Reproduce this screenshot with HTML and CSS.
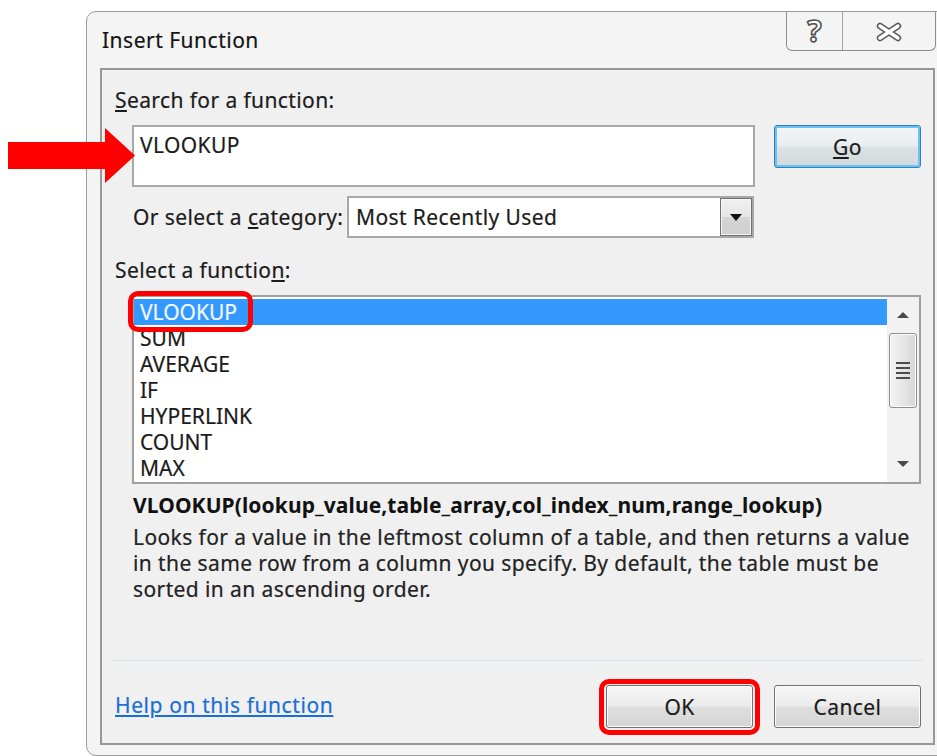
FILE: index.html
```html
<!DOCTYPE html>
<html lang="en">
<head>
<meta charset="utf-8">
<title>Insert Function</title>
<link rel="stylesheet" href="styles.css">
</head>
<body>
<div class="stage">
  <div class="dialog">
    <div class="titlebar">
      <span class="title">Insert Function</span>
      <div class="caption-btns">
        <span class="cap help">?</span>
        <span class="cap close">
          <svg width="28" height="20" viewBox="0 0 28 20">
            <path d="M5 4 L23 16 M23 4 L5 16" stroke="#5a5a5a" stroke-width="6.5" stroke-linecap="round" fill="none"/>
            <path d="M5 4 L23 16 M23 4 L5 16" stroke="#ffffff" stroke-width="3.5" stroke-linecap="round" fill="none"/>
          </svg>
        </span>
      </div>
    </div>

    <div class="panel">
      <div class="label"><u>S</u>earch for a function:</div>
      <div class="search-row">
        <div class="textbox">VLOOKUP</div>
        <button class="btn go"><u>G</u>o</button>
      </div>

      <div class="category-row">
        <span class="label">Or select a <u>c</u>ategory:</span>
        <div class="select">
          <span class="select-value">Most Recently Used</span>
          <span class="select-arrow">
            <svg width="12" height="7" viewBox="0 0 12 7"><path d="M0 0 H12 L6 7 Z" fill="#111"/></svg>
          </span>
        </div>
      </div>

      <div class="label fn-label">Select a functio<u>n</u>:</div>
      <div class="listbox">
        <ul class="items">
          <li class="selected"><span class="hl">VLOOKUP</span></li>
          <li>SUM</li>
          <li>AVERAGE</li>
          <li>IF</li>
          <li>HYPERLINK</li>
          <li>COUNT</li>
          <li>MAX</li>
        </ul>
        <div class="scrollbar">
          <span class="sb-arrow">
            <svg width="12" height="6" viewBox="0 0 12 6"><path d="M0 6 L6 0 L12 6 Z" fill="#4a4a4a"/></svg>
          </span>
          <div class="sb-track">
            <div class="sb-thumb">
              <span class="grip"></span><span class="grip"></span><span class="grip"></span><span class="grip"></span>
            </div>
          </div>
          <span class="sb-arrow">
            <svg width="12" height="6" viewBox="0 0 12 6"><path d="M0 0 L12 0 L6 6 Z" fill="#4a4a4a"/></svg>
          </span>
        </div>
      </div>

      <div class="signature">VLOOKUP(lookup_value,table_array,col_index_num,range_lookup)</div>
      <p class="desc">Looks for a value in the leftmost column of a table, and then returns a value<br>in the same row from a column you specify. By default, the table must be<br>sorted in an ascending order.</p>

      <div class="sep"></div>

      <div class="footer">
        <a class="help-link" href="#">Help on this function</a>
        <div class="actions">
          <span class="ok-mark"><button class="btn">OK</button></span>
          <button class="btn">Cancel</button>
        </div>
      </div>
    </div>
  </div>

  <svg class="pointer" width="128" height="56" viewBox="0 0 128 56">
    <path d="M0 14 H97 V0 L127 27.5 L97 55 V41 H0 Z" fill="#ff0000"/>
  </svg>
</div>
</body>
</html>
```

FILE: styles.css
```css
* {
  box-sizing: border-box;
}

html,
body {
  margin: 0;
  padding: 0;
}

body {
  width: 937px;
  height: 756px;
  overflow: hidden;
  background: #ffffff;
  font-family: "Noto Sans", "Open Sans", sans-serif;
  color: #1b1b1b;
}

.stage {
  position: relative;
  height: 756px;
  padding: 11px 0 0 86px;
}

/* outer window frame */
.dialog {
  width: 870px;
  height: 745px;
  border: 1px solid #9b9b9b;
  border-radius: 10px 10px 0 10px;
  background: #f4f4f4;
  display: flex;
  flex-direction: column;
}

.titlebar {
  height: 56px;
  display: flex;
  align-items: flex-start;
  flex-shrink: 0;
}

.title {
  font-size: 21px;
  letter-spacing: 0.5px;
  line-height: 26px;
  padding: 15px 0 0 15px;
  color: #141414;
  -webkit-text-stroke: 0.2px #141414;
}

.caption-btns {
  margin-left: auto;
  margin-right: 19px;
  display: flex;
  height: 39px;
  border: 1px solid #8d8d8d;
  border-top: none;
  border-radius: 0 0 6px 6px;
  background: #f4f4f4;
}

.cap {
  display: flex;
  align-items: center;
  justify-content: center;
}

.cap.help {
  width: 56px;
  border-right: 1px solid #a5a5a5;
  font-size: 30px;
  font-weight: bold;
  color: #ffffff;
  -webkit-text-stroke: 1.6px #505050;
  line-height: 1;
  padding-bottom: 1px;
}

.cap.close {
  width: 92px;
  padding-top: 1px;
}

/* client area */
.panel {
  margin-left: 13px;
  width: 835px;
  height: 677px;
  flex-shrink: 0;
  border: 2px solid #979797;
  background: #f0f0f0;
  padding: 17px 12px 0 13px;
  font-size: 21px;
  letter-spacing: 0.4px;
  line-height: 26px;
  -webkit-text-stroke: 0.2px currentColor;
}

.label {
  color: #1b1b1b;
}

.search-row {
  display: flex;
  align-items: flex-start;
  margin-top: 12px;
  padding-left: 17px;
}

.textbox {
  width: 623px;
  height: 62px;
  border: 2px solid #a8a8a8;
  background: #ffffff;
  padding: 5px 6px;
}

.btn {
  font: inherit;
  letter-spacing: inherit;
  color: #1b1b1b;
  height: 43px;
  border: 1px solid #707070;
  border-radius: 3px;
  background: linear-gradient(#f6f6f6 0%, #ececec 48%, #dedede 52%, #d6d6d6 100%);
  box-shadow: inset 0 0 0 1px #fbfbfb;
  padding: 0;
  line-height: 26px;
  -webkit-text-stroke: 0.2px #1b1b1b;
}

.btn.go {
  width: 147px;
  margin-left: 19px;
  border: 1px solid #2f7fc0;
  box-shadow: inset 0 0 0 2px #68c3f2;
  background: linear-gradient(#f2f6f8 0%, #e9edf0 48%, #dce1e4 52%, #d3d8db 100%);
}

.category-row {
  display: flex;
  align-items: center;
  margin-top: 9px;
  padding-left: 18px;
}

.select {
  margin-left: auto;
  margin-right: 167px;
  width: 407px;
  height: 42px;
  border: 2px solid #a8a8a8;
  background: #ffffff;
  display: flex;
  align-items: center;
  padding-left: 7px;
}

.select-value {
  flex: 1;
}

.select-arrow {
  width: 32px;
  height: 38px;
  border: 1px solid #707070;
  box-shadow: inset 0 0 0 1px #f6f6f6;
  background: linear-gradient(#f0f0f0 0%, #e6e6e6 50%, #d4d4d4 51%, #cfcfcf 100%);
  display: flex;
  align-items: center;
  justify-content: center;
}

.fn-label {
  margin-top: 19px;
}

.listbox {
  margin-top: 12px;
  margin-left: 17px;
  width: 789px;
  height: 189px;
  border: 2px solid #a0a0a0;
  background: #ffffff;
  display: flex;
}

.items {
  list-style: none;
  margin: 0;
  padding: 2px 0 0 0;
  flex: 1;
}

.items li {
  height: 26px;
  line-height: 26px;
  padding-left: 6px;
  letter-spacing: 0;
}

.items li.selected {
  background: #3399ff;
  color: #f4f8ff;
}

.hl {
  position: relative;
  display: inline-block;
}

/* annotation ring around the selected name */
.hl::after {
  content: "";
  position: absolute;
  left: -12px;
  right: -16px;
  top: -8px;
  bottom: -7px;
  border: 5px solid #ff0000;
  border-radius: 10px;
}

.scrollbar {
  width: 32px;
  background: #f2f2f2;
  display: flex;
  flex-direction: column;
  align-items: center;
}

.sb-arrow {
  height: 36px;
  display: flex;
  align-items: center;
  justify-content: center;
  width: 100%;
}

.sb-track {
  flex: 1;
  width: 100%;
  padding: 0 2px;
}

.sb-thumb {
  height: 75px;
  border: 1px solid #8f8f8f;
  border-radius: 3px;
  background: linear-gradient(90deg, #f3f3f3 0%, #e6e6e6 50%, #d6d6d6 100%);
  box-shadow: inset 0 0 0 1px #fafafa;
  display: flex;
  flex-direction: column;
  align-items: center;
  justify-content: center;
  gap: 3px;
}

.grip {
  width: 14px;
  height: 2px;
  background: #4d4d4d;
}

.signature {
  margin-top: 8px;
  padding-left: 18px;
  font-weight: bold;
  letter-spacing: 0.1px;
  color: #111111;
  -webkit-text-stroke: 0;
}

.desc {
  margin: 6px 0 0 0;
  padding-left: 18px;
  white-space: nowrap;
  color: #222222;
}

.sep {
  margin-top: 58px;
  margin-left: -2px;
  width: 810px;
  height: 1px;
  background: #d5dfe6;
}

.footer {
  display: flex;
  align-items: center;
  margin-top: 24px;
}

.help-link {
  color: #1a6fd6;
  text-decoration: underline;
  letter-spacing: 0.6px;
  margin-top: -4px;
}

.actions {
  margin-left: auto;
  display: flex;
  gap: 21px;
}

.actions .btn {
  width: 147px;
}

.ok-mark {
  position: relative;
  display: flex;
}

/* annotation ring around the confirm button */
.ok-mark::after {
  content: "";
  position: absolute;
  left: -7px;
  right: -7px;
  top: -6px;
  bottom: -7px;
  border: 5px solid #ff0000;
  border-radius: 10px;
}

.pointer {
  position: absolute;
  left: 8px;
  top: 128px;
}
```
